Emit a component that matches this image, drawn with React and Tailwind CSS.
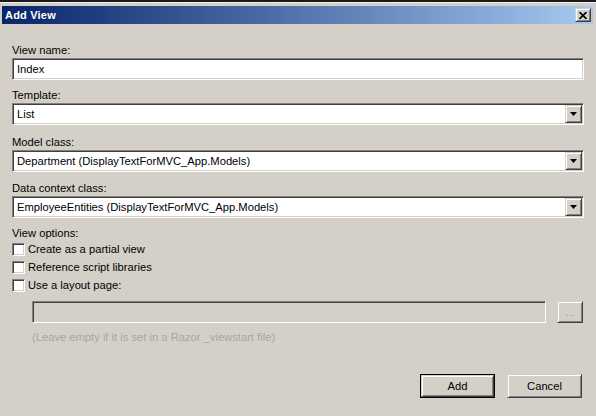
import React from 'react';

const font = { fontFamily: '"Liberation Sans", Arial, sans-serif' };

const sunken =
  'border border-t-[#808080] border-l-[#808080] border-r-white border-b-white shadow-[inset_1px_1px_#404040,inset_-1px_-1px_#D4D0C8]';

const raised =
  'border border-t-[#D4D0C8] border-l-[#D4D0C8] border-r-[#404040] border-b-[#404040] shadow-[inset_1px_1px_white,inset_-1px_-1px_#808080]';

const Arrow = () => (
  <svg width="7" height="4" viewBox="0 0 7 4">
    <polygon points="0,0 7,0 3.5,4" fill="#000" />
  </svg>
);

const TextBox = ({ value }) => (
  <div className={`h-[22px] bg-white flex items-center pl-[4px] pt-px text-black ${sunken}`}>{value}</div>
);

const Select = ({ value }) => (
  <div className={`h-[22px] bg-white flex items-center text-black ${sunken}`}>
    <span className="flex-1 pl-[4px] pt-px truncate">{value}</span>
    <div className={`w-[17px] h-[18px] mr-px bg-[#D4D0C8] flex items-center justify-center ${raised}`}>
      <Arrow />
    </div>
  </div>
);

const Field = ({ label, mt, children }) => (
  <div className={mt}>
    <div className="h-[14px] leading-[12px] text-black">{label}</div>
    {children}
  </div>
);

const Check = ({ label }) => (
  <div className="h-[18px] flex items-center gap-[3px]">
    <div className={`w-[13px] h-[13px] bg-white ${sunken}`} />
    <span className="text-black">{label}</span>
  </div>
);

export default function App() {
  return (
    <div className="w-[596px] h-[416px] bg-[#D4D0C8] overflow-hidden text-[11.2px]" style={font}>
      {/* window top edge */}
      <div className="h-[2px] bg-[#1a1a1a]" />
      <div className="h-px bg-[#f0f0f0]" />
      <div className="h-[3px]" />

      {/* title bar */}
      <div className="mx-[2px] mr-[3px] h-[18px] bg-gradient-to-r from-[#0A246A] to-[#A6CAF0] flex items-center justify-between pl-[3px] pr-[2px]">
        <span className="text-white font-bold text-[11px] tracking-[0.2px]">Add View</span>
        <div className={`w-[16px] h-[14px] bg-[#D4D0C8] flex items-center justify-center ${raised}`}>
          <svg width="8" height="7" viewBox="0 0 8 7">
            <path d="M0.5 0 L7.5 7 M7.5 0 L0.5 7" stroke="#000" strokeWidth="1.6" />
          </svg>
        </div>
      </div>

      <div className="pl-[12px] pr-[12px] pt-[20px]">
        <Field label="View name:" mt="">
          <TextBox value="Index" />
        </Field>
        <Field label="Template:" mt="mt-[9px]">
          <Select value="List" />
        </Field>
        <Field label="Model class:" mt="mt-[11px]">
          <Select value="Department (DisplayTextForMVC_App.Models)" />
        </Field>
        <Field label="Data context class:" mt="mt-[10px]">
          <Select value="EmployeeEntities (DisplayTextForMVC_App.Models)" />
        </Field>

        <div className="mt-[8px] h-[14px] leading-[14px] text-black">View options:</div>
        <Check label="Create as a partial view" />
        <Check label="Reference script libraries" />
        <Check label="Use a layout page:" />

        <div className="mt-[7px] pl-[20px] flex items-center gap-[11px]">
          <div className={`w-[514px] h-[22px] bg-[#D4D0C8] ${sunken}`} />
          <div className={`w-[26px] h-[22px] bg-[#D4D0C8] flex items-center justify-center text-[#A0A0A0] ${raised}`}>
            ...
          </div>
        </div>
        <div className="mt-[7px] pl-[20px] h-[14px] leading-[14px] text-[#A6A6A6]">
          (Leave empty if it is set in a Razor _viewstart file)
        </div>

        <div className="mt-[30px] flex justify-end gap-[12px] pr-[2px]">
          <div className="w-[75px] h-[24px] border border-black">
            <div className={`w-full h-full bg-[#D4D0C8] flex items-center justify-center text-black ${raised}`}>Add</div>
          </div>
          <div className={`w-[75px] h-[24px] bg-[#D4D0C8] flex items-center justify-center text-black ${raised}`}>
            Cancel
          </div>
        </div>
      </div>
    </div>
  );
}
